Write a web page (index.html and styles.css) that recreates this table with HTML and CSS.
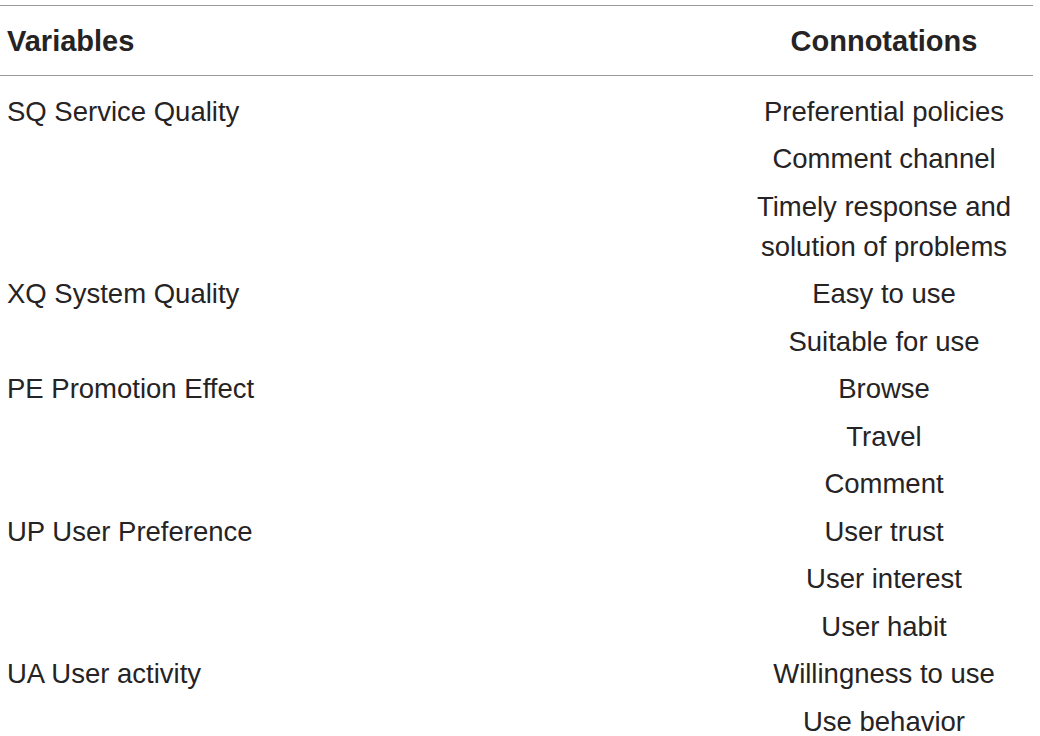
FILE: index.html
```html
<!DOCTYPE html>
<html lang="en">
<head>
    <meta charset="UTF-8">
    <title>Variables and connotations</title>
    <link rel="stylesheet" href="styles.css">
</head>
<body>
    <table class="vars">
        <thead>
            <tr>
                <th class="vars__name">Variables</th>
                <th class="vars__conn">Connotations</th>
            </tr>
        </thead>
        <tbody>
            <tr class="vars__first">
                <td class="vars__name">SQ Service Quality</td>
                <td class="vars__conn">Preferential policies</td>
            </tr>
            <tr>
                <td class="vars__name"></td>
                <td class="vars__conn">Comment channel</td>
            </tr>
            <tr>
                <td class="vars__name"></td>
                <td class="vars__conn">Timely response and<br>solution of problems</td>
            </tr>
            <tr>
                <td class="vars__name">XQ System Quality</td>
                <td class="vars__conn">Easy to use</td>
            </tr>
            <tr>
                <td class="vars__name"></td>
                <td class="vars__conn">Suitable for use</td>
            </tr>
            <tr>
                <td class="vars__name">PE Promotion Effect</td>
                <td class="vars__conn">Browse</td>
            </tr>
            <tr>
                <td class="vars__name"></td>
                <td class="vars__conn">Travel</td>
            </tr>
            <tr>
                <td class="vars__name"></td>
                <td class="vars__conn">Comment</td>
            </tr>
            <tr>
                <td class="vars__name">UP User Preference</td>
                <td class="vars__conn">User trust</td>
            </tr>
            <tr>
                <td class="vars__name"></td>
                <td class="vars__conn">User interest</td>
            </tr>
            <tr>
                <td class="vars__name"></td>
                <td class="vars__conn">User habit</td>
            </tr>
            <tr>
                <td class="vars__name">UA User activity</td>
                <td class="vars__conn">Willingness to use</td>
            </tr>
            <tr>
                <td class="vars__name"></td>
                <td class="vars__conn">Use behavior</td>
            </tr>
        </tbody>
    </table>
</body>
</html>
```

FILE: styles.css
```css
body{margin:0;background:#fff;font-family:"Liberation Sans",Arial,sans-serif;color:#262324}
.vars{width:1033px;margin-top:5px;border-collapse:collapse;font-size:27.5px;line-height:40px;table-layout:fixed}
.vars thead tr{border-top:1px solid #999;border-bottom:1px solid #999}
.vars th{font-weight:700;font-size:29px;height:69px;padding:0;vertical-align:middle}
.vars td{padding:3.75px 0;vertical-align:top}
.vars__first td{padding-top:15.5px}
.vars__name{text-align:left;padding-left:7px !important;width:728px}
.vars__conn{text-align:center}
```
